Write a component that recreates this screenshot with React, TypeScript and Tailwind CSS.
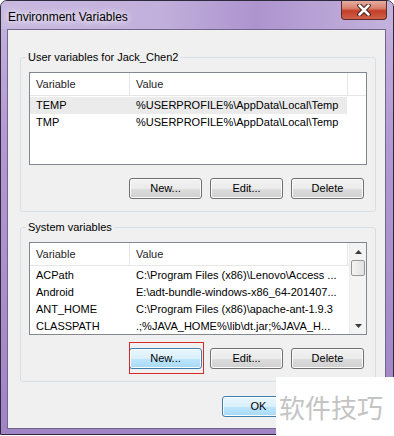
import { ReactNode } from 'react';

type Row = [string, string];

const userRows: Row[] = [
  ['TEMP', '%USERPROFILE%\\AppData\\Local\\Temp'],
  ['TMP', '%USERPROFILE%\\AppData\\Local\\Temp'],
];

const systemRows: Row[] = [
  ['ACPath', 'C:\\Program Files (x86)\\Lenovo\\Access ...'],
  ['Android', 'E:\\adt-bundle-windows-x86_64-201407...'],
  ['ANT_HOME', 'C:\\Program Files (x86)\\apache-ant-1.9.3'],
  ['CLASSPATH', '.;%JAVA_HOME%\\lib\\dt.jar;%JAVA_H...'],
];

function Btn({ children, blue = false }: { children: ReactNode; blue?: boolean }) {
  return (
    <div
      className={`w-[73px] h-[21px] rounded-[3px] border flex items-center justify-center text-black shadow-[inset_0_0_0_1px_#fbfbfb] ${
        blue
          ? 'border-[#3c7fb1] bg-[linear-gradient(#eaf6fd,#d9f0fc_50%,#bee6fd_50%,#a7d9f5)]'
          : 'border-[#707070] bg-[linear-gradient(#f2f2f2,#ebebeb_50%,#dddddd_50%,#cfcfcf)]'
      }`}
    >
      {children}
    </div>
  );
}

function Header({ filler = true }: { filler?: boolean }) {
  return (
    <div className="flex h-[23px] border-b border-[#e6e6e6] bg-white text-[#1e1e1e]">
      <div className="w-[100px] shrink-0 border-r border-[#e6e6e6] pl-[6px] flex items-center">Variable</div>
      <div className="w-[218px] shrink-0 border-r border-[#e6e6e6] pl-[6px] flex items-center">Value</div>
      {filler && <div className="flex-1" />}
    </div>
  );
}

function Rows({ rows, selected }: { rows: Row[]; selected?: number }) {
  return (
    <div className="pt-[1px]">
      {rows.map(([name, value], i) => (
        <div key={name} className={`flex h-[17px] w-[317px] items-center ${i === selected ? 'bg-[#ebebeb]' : ''}`}>
          <div className="w-[100px] shrink-0 pl-[6px] whitespace-nowrap overflow-hidden">{name}</div>
          <div className="w-[217px] shrink-0 pl-[6px] whitespace-nowrap overflow-hidden">{value}</div>
        </div>
      ))}
    </div>
  );
}

function ScrollBar() {
  return (
    <div className="w-[17px] shrink-0 bg-[#f3f3f3] border-l border-[#ececec] flex flex-col">
      <div className="h-[17px] flex items-center justify-center">
        <svg width="7" height="4" viewBox="0 0 7 4"><path d="M0 4 L3.5 0 L7 4 Z" fill="#3a3a3a" /></svg>
      </div>
      <div className="h-[16px] mx-[1px] rounded-[2px] border border-[#979797] bg-[linear-gradient(90deg,#f3f3f3,#e2e2e2)]" />
      <div className="flex-1" />
      <div className="h-[17px] flex items-center justify-center">
        <svg width="7" height="4" viewBox="0 0 7 4"><path d="M0 0 L3.5 4 L7 0 Z" fill="#3a3a3a" /></svg>
      </div>
    </div>
  );
}

function Group({ title, children, buttonsBlue }: { title: string; children: ReactNode; buttonsBlue?: boolean }) {
  return (
    <div className="relative ml-[12px] mr-[9px] border border-[#d5dfe5] rounded-[3px] px-[8px] pt-[14px] pb-[12px]">
      <span className="absolute left-[5px] -top-[8px] px-[2px] leading-[14px] bg-[#f0f0f0] text-black">{title}</span>
      <div className="h-[93px] border border-[#828790] bg-white overflow-hidden">{children}</div>
      <div className="mt-[13px] pr-[3px] flex justify-end gap-[8px]">
        <Btn blue={buttonsBlue}>New...</Btn>
        <Btn>Edit...</Btn>
        <Btn>Delete</Btn>
      </div>
    </div>
  );
}

export default function App() {
  return (
    <div className="relative w-[394px] h-[436px] bg-white overflow-hidden font-['Liberation_Sans',Arial,sans-serif] text-[11px]">
      <div className="w-[394px] h-[435px] rounded-t-[7px] border border-[#2e2a3c] bg-[linear-gradient(#c6b4de,#b39ad3_30%,#a084c6)] flex flex-col">
        <div className="h-[28px] shrink-0 flex justify-between bg-[linear-gradient(90deg,#c9b9e0,#c2b0dc_40%,#ad94ce_65%,#c4b2dd)] rounded-t-[6px]">
          <span className="pl-[7px] pt-[7px] text-[12px] text-black [text-shadow:0_0_6px_#ffffff,0_0_10px_#ffffff]">
            Environment Variables
          </span>
          <div className="mr-[6px] w-[46px] h-[19px] rounded-b-[4px] border border-t-0 border-[#5b2a26] bg-[linear-gradient(#e6ada1,#d8826f_40%,#c23e28_55%,#d0624a)] flex items-center justify-center">
            <svg width="14" height="12" viewBox="0 0 14 12">
              <path d="M2.5 1.5 L11.5 10.5 M11.5 1.5 L2.5 10.5" stroke="#3b1512" strokeWidth="4.5" strokeLinecap="round" />
              <path d="M2.5 1.5 L11.5 10.5 M11.5 1.5 L2.5 10.5" stroke="#ffffff" strokeWidth="2.5" strokeLinecap="round" />
            </svg>
          </div>
        </div>

        <div className="flex-1 ml-[6px] mr-[7px] mb-[5px] border border-[#6f6689] bg-[#f0f0f0] flex flex-col">
          <div className="mt-[27px]">
            <Group title="User variables for Jack_Chen2">
              <Header />
              <Rows rows={userRows} selected={0} />
            </Group>
          </div>
          <div className="mt-[15px]">
            <Group title="System variables" buttonsBlue>
              <div className="flex h-full">
                <div className="flex-1">
                  <Header filler={false} />
                  <Rows rows={systemRows} />
                </div>
                <ScrollBar />
              </div>
            </Group>
          </div>
          <div className="mt-[14px] mr-[9px] flex justify-end gap-[8px]">
            <Btn blue>OK</Btn>
            <Btn>Cancel</Btn>
          </div>
        </div>
      </div>

      <div className="absolute left-[129px] top-[342px] w-[75px] h-[32px] border border-[#d42a2a]" />

      <div className="absolute left-[276px] top-[377px] w-[118px] h-[59px] bg-white flex items-center pl-[3px]">
        <span className="text-[26px] leading-none text-[#c4c4c4] font-['Noto_Sans_CJK_SC',sans-serif]">软件技巧</span>
      </div>
    </div>
  );
}
